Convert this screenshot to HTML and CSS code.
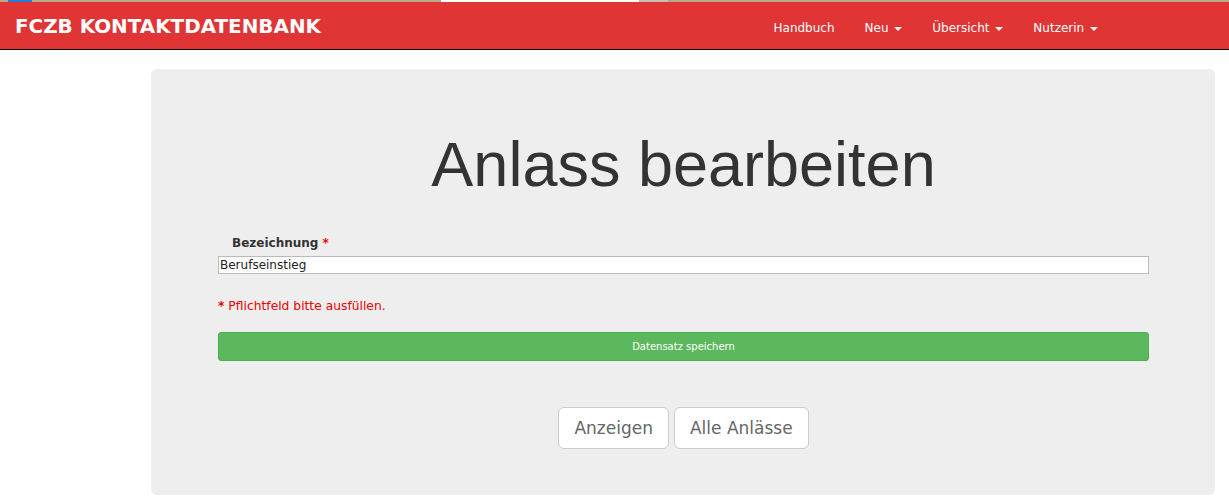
FILE: index.html
```html
<!DOCTYPE html>
<html lang="de">
<head>
<meta charset="utf-8">
<title>Anlass bearbeiten</title>
<link rel="stylesheet" href="styles.css">
</head>
<body>
<div class="topstrip">
  <span class="seg seg-tan seg-a"></span>
  <span class="seg seg-blue"></span>
  <span class="seg seg-tan seg-b"></span>
  <span class="seg seg-white"></span>
  <span class="seg seg-gray"></span>
  <span class="seg seg-tan seg-c"></span>
</div>
<header class="navbar">
  <a class="brand" href="#">FCZB KONTAKTDATENBANK</a>
  <ul class="nav">
    <li><a href="#">Handbuch</a></li>
    <li><a href="#">Neu <span class="caret"></span></a></li>
    <li><a href="#">Übersicht <span class="caret"></span></a></li>
    <li><a href="#">Nutzerin <span class="caret"></span></a></li>
  </ul>
</header>
<main class="main">
  <section class="jumbotron">
    <h1 class="title">Anlass bearbeiten</h1>
    <form class="form">
      <label class="label" for="bez">Bezeichnung <span class="req">*</span></label>
      <input class="input" id="bez" type="text" value="Berufseinstieg">
      <p class="hint"><span class="hint-star">*</span> Pflichtfeld bitte ausfüllen.</p>
      <button class="btn-save" type="button">Datensatz speichern</button>
    </form>
    <div class="actions">
      <a class="btn-lg" href="#">Anzeigen</a>
      <a class="btn-lg" href="#">Alle Anlässe</a>
    </div>
  </section>
</main>
</body>
</html>
```

FILE: styles.css
```css
* { box-sizing: border-box; }
html, body { margin: 0; padding: 0; background: #fff; }
body { font-family: "DejaVu Sans", Verdana, sans-serif; color: #333; }

.topstrip { display: flex; height: 2px; }
.seg { display: block; height: 2px; }
.seg-tan { background: #b9a989; }
.seg-a { width: 8px; }
.seg-blue { width: 24px; background: #1f7fd0; }
.seg-b { width: 409px; }
.seg-white { width: 198px; background: #ffffff; }
.seg-gray { width: 29px; background: #c3bfb4; }
.seg-c { flex: 1; }

.navbar {
  display: flex;
  align-items: center;
  height: 48px;
  background: #e03435;
  border-bottom: 1px solid #000;
}
.brand {
  margin-left: 15px;
  margin-top: 3px;
  color: #fff;
  text-decoration: none;
  font-weight: bold;
  font-size: 19.9px;
  line-height: 24px;
}
.nav {
  display: flex;
  list-style: none;
  margin: 4px 116px 0 auto;
  padding: 0;
}
.nav a {
  display: flex;
  align-items: center;
  padding: 0 15px;
  color: #fff;
  text-decoration: none;
  font-size: 12px;
  line-height: 20px;
  white-space: pre;
}
.caret {
  display: inline-block;
  width: 0; height: 0;
  margin-left: 2px;
  margin-top: 2px;
  border-top: 4px solid #fff;
  border-left: 4px solid transparent;
  border-right: 4px solid transparent;
}

.main { padding-top: 19px; }
.jumbotron {
  margin-left: 151px;
  width: 1064px;
  height: 426px;
  padding: 61px 66px 0 67px;
  background: #eeeeee;
  border-radius: 6px;
}
.title {
  margin: 0;
  text-align: center;
  font-family: "Liberation Sans", Arial, sans-serif;
  font-weight: normal;
  font-size: 63px;
  line-height: 69px;
  color: #333;
}
.form { display: flex; flex-direction: column; margin-top: 36px; }
.label {
  padding-left: 14px;
  font-weight: bold;
  font-size: 12px;
  line-height: 17px;
  height: 17px;
  color: #333;
}
.req { color: #e00; }
.input {
  margin-top: 4px;
  height: 18px;
  width: 100%;
  border: 1px solid #bbb;
  padding: 0 1px;
  font-family: "DejaVu Sans", Verdana, sans-serif;
  font-size: 12px;
  color: #222;
  background: #fff;
}
.hint {
  margin: 24px 0 0;
  font-size: 12.3px;
  line-height: 17px;
  color: #ee0000;
}
.hint-star { font-weight: bold; }
.btn-save {
  margin-top: 17px;
  height: 29px;
  width: 100%;
  background: #5cb85c;
  border: 1px solid #4cae4c;
  border-radius: 3px;
  color: #fff;
  font-family: "DejaVu Sans", Verdana, sans-serif;
  font-size: 10px;
}
.actions {
  display: flex;
  justify-content: center;
  gap: 5px;
  margin-top: 46px;
}
.btn-lg {
  display: block;
  height: 42px;
  padding: 0 15px;
  line-height: 41px;
  border: 1px solid #ccc;
  border-radius: 6px;
  background: #fff;
  color: #666;
  text-decoration: none;
  font-size: 17px;
}
```
